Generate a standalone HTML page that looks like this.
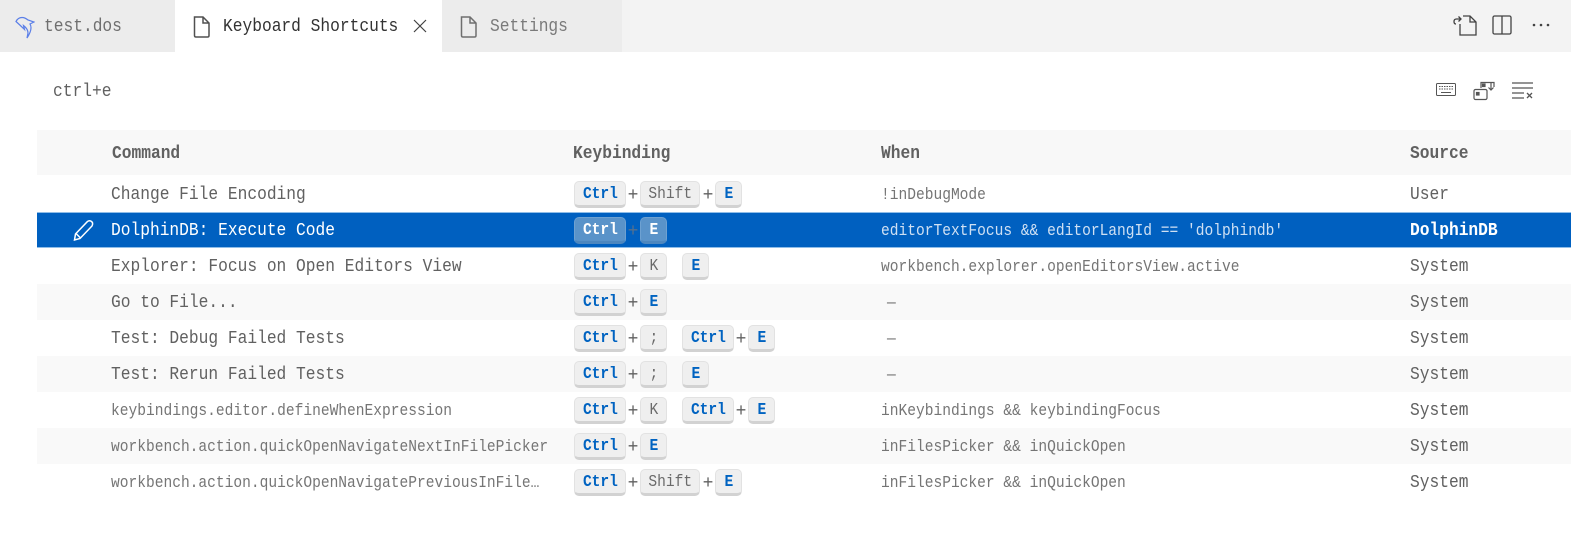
<!DOCTYPE html>
<html><head><meta charset="utf-8"><style>
*{box-sizing:border-box}
html,body{margin:0;padding:0;background:#fff}
#p{position:relative;width:1571px;height:533px;overflow:hidden;background:#fff;font-family:"Liberation Mono","DejaVu Sans Mono",monospace;color:#616161}
#p div,#p svg{position:absolute}
.t{white-space:pre;line-height:24px;height:24px;transform:scaleX(.9);transform-origin:0 50%}
.big{font-size:18.05px}
.sm{font-size:16.2px;color:#757575}
.row{left:37px;width:1534px;height:36px}
.alt{background:#f9f9f9}
.k{height:27px;background:#efefef;border:1px solid #e2e2e2;border-bottom:3px solid #d2d2d2;border-radius:5px;text-align:center;font-size:16.2px;line-height:24px;color:#6a6a6a;white-space:pre}
.k b{display:inline-block;font-weight:inherit;transform:scaleX(.9)}
.h{color:#0063c1;font-weight:bold}
.s .k{background:#5a93c9;border-color:#6ea1d1;border-bottom-color:#4d87bf;color:#fff}
.p{width:12px;text-align:center;font-size:18px;line-height:26px;color:#616161}
</style></head><body><div id="p">
<div style="left:0;top:0;width:1571px;height:52px;background:#f3f3f3"></div>
<div style="left:0;top:0;width:175px;height:52px;background:#ececec"></div>
<div style="left:175px;top:0;width:267px;height:52px;background:#fff"></div>
<div style="left:442px;top:0;width:180px;height:52px;background:#ececec"></div>
<svg style="left:15px;top:16px" width="20" height="24" viewBox="0 0 20 24" fill="none" stroke="#5b7fe8" stroke-width="1.200"><path d="M1 5.500Q3 1.500 7 1.500Q10 1.500 13 4L19 6L15 8Q18 13 12 22L13 17Q13 13 8.500 9.500L9.500 13.500Q6 10 1 5.500Z"/></svg>
<div class="t big" style="left:44px;top:15px;color:#6f6f6f">test.dos</div>
<svg style="left:192px;top:16px" width="20" height="22" viewBox="0 0 20 22" fill="none" stroke="#505050" stroke-width="1.500"><path d="M2.500 1H11L17 7V19.500Q17 21 15.500 21H4Q2.500 21 2.500 19.500V1ZM11 1V7H17"/></svg>
<div class="t big" style="left:223px;top:15px;color:#333">Keyboard Shortcuts</div>
<svg style="left:413px;top:19px" width="14" height="14" viewBox="0 0 14 14" stroke="#424242" stroke-width="1.200"><path d="M1 1L13 13M13 1L1 13"/></svg>
<svg style="left:459px;top:16px" width="20" height="22" viewBox="0 0 20 22" fill="none" stroke="#6f6f6f" stroke-width="1.500"><path d="M2.500 1H11L17 7V19.500Q17 21 15.500 21H4Q2.500 21 2.500 19.500V1ZM11 1V7H17"/></svg>
<div class="t big" style="left:490px;top:15px;color:#7a7a7a">Settings</div>
<svg style="left:1453px;top:14px" width="24" height="24" viewBox="0 0 24 24" fill="none" stroke="#424242" stroke-width="1.300"><path d="M7 10V21H23V8L17 2H10M17 2V8H23M8 5H3.500Q1 5 1 7.500Q1 10 3 10M5.500 2.500L8 5L5.500 7.500"/></svg>
<svg style="left:1492px;top:15px" width="20" height="20" viewBox="0 0 20 20" fill="none" stroke="#424242" stroke-width="1.300"><rect x="1" y="1" width="18" height="18" rx="1.500"/><path d="M10 1V19"/></svg>
<svg style="left:1532px;top:23px" width="18" height="4" viewBox="0 0 18 4" fill="#424242"><circle cx="2" cy="2" r="1.300"/><circle cx="9" cy="2" r="1.300"/><circle cx="16" cy="2" r="1.300"/></svg>

<div class="t big" style="left:53px;top:80px;color:#616161">ctrl+e</div>
<svg style="left:1436px;top:82px" width="21" height="16" viewBox="0 0 21 16" fill="none" stroke="#555" stroke-width="1"><rect x=".5" y="1.500" width="19" height="12" rx="1"/><path stroke-dasharray="1.500 1" d="M3 4.500H17M3 7H17"/><path d="M5 10.500H15"/></svg>
<svg style="left:1473px;top:81px" width="24" height="20" viewBox="0 0 24 20" fill="none" stroke="#555" stroke-width="1.200"><path d="M8 7V1.500H21V6"/><rect x="1" y="8.500" width="13" height="10" rx="1.500"/><path d="M18 2V9M15.500 6.500L18 9L20.500 6.500"/><rect x="3.500" y="11.500" width="2.500" height="2.500" fill="#555"/><rect x="9.500" y="3" width="2.500" height="2.500" fill="#555"/></svg>
<svg style="left:1511px;top:82px" width="23" height="18" viewBox="0 0 23 18" fill="none" stroke="#555" stroke-width="1.300"><path d="M1 1H22M1 6H22M1 11H13M1 16H13M16 11L21 16M21 11L16 16"/></svg>

<div style="left:37px;top:130px;width:1534px;height:45px;background:#f8f8f8"></div>
<div class="t big" style="left:112px;top:142px;font-weight:bold">Command</div>
<div class="t big" style="left:573px;top:142px;font-weight:bold">Keybinding</div>
<div class="t big" style="left:881px;top:142px;font-weight:bold">When</div>
<div class="t big" style="left:1410px;top:142px;font-weight:bold">Source</div>

<div class="row alt" style="top:284px"></div>
<div class="row alt" style="top:356px"></div>
<div class="row alt" style="top:428px"></div>
<div class="row" style="top:212px;height:36px;background:#0060c0;border-top:1px solid #8fbde8;border-bottom:1px solid #8fbde8"></div>

<div class="t big" style="left:111px;top:183px">Change File Encoding</div>
<div class="k h" style="left:574px;top:181px;width:52px"><b>Ctrl</b></div><div class="p" style="left:627px;top:183px">+</div>
<div class="k" style="left:640px;top:181px;width:60px"><b>Shift</b></div><div class="p" style="left:702px;top:183px">+</div>
<div class="k h" style="left:715px;top:181px;width:27px"><b>E</b></div>
<div class="t sm" style="left:881px;top:183px">!inDebugMode</div>
<div class="t big" style="left:1410px;top:183px">User</div>

<svg style="left:72px;top:218px" width="24" height="24" viewBox="0 0 24 24" fill="none" stroke="#fff" stroke-width="1.500"><path d="M2.500 22L3.500 16L15.500 3.500Q17.500 2 19.500 3.500T20 8L8 20.500L2.500 22ZM4.500 16L8 19.500"/></svg>
<div class="t big" style="left:111px;top:219px;color:#fff">DolphinDB: Execute Code</div>
<div class="s">
<div class="k" style="left:574px;top:217px;width:52px;font-weight:bold"><b>Ctrl</b></div><div class="p" style="left:627px;top:219px;color:#55708e">+</div>
<div class="k" style="left:640px;top:217px;width:27px;font-weight:bold"><b>E</b></div>
</div>
<div class="t sm" style="left:881px;top:219px;color:#cfe0f3">editorTextFocus &amp;&amp; editorLangId == 'dolphindb'</div>
<div class="t big" style="left:1410px;top:219px;color:#fff;font-weight:bold">DolphinDB</div>

<div class="t big" style="left:111px;top:255px">Explorer: Focus on Open Editors View</div>
<div class="k h" style="left:574px;top:253px;width:52px"><b>Ctrl</b></div><div class="p" style="left:627px;top:255px">+</div>
<div class="k" style="left:640px;top:253px;width:27px"><b>K</b></div>
<div class="k h" style="left:682px;top:253px;width:27px"><b>E</b></div>
<div class="t sm" style="left:881px;top:255px">workbench.explorer.openEditorsView.active</div>
<div class="t big" style="left:1410px;top:255px">System</div>

<div class="t big" style="left:111px;top:291px">Go to File...</div>
<div class="k h" style="left:574px;top:289px;width:52px"><b>Ctrl</b></div><div class="p" style="left:627px;top:291px">+</div>
<div class="k h" style="left:640px;top:289px;width:27px"><b>E</b></div>
<div class="t sm" style="left:887px;top:291px">—</div>
<div class="t big" style="left:1410px;top:291px">System</div>

<div class="t big" style="left:111px;top:327px">Test: Debug Failed Tests</div>
<div class="k h" style="left:574px;top:325px;width:52px"><b>Ctrl</b></div><div class="p" style="left:627px;top:327px">+</div>
<div class="k" style="left:640px;top:325px;width:27px"><b>;</b></div>
<div class="k h" style="left:682px;top:325px;width:52px"><b>Ctrl</b></div><div class="p" style="left:735px;top:327px">+</div>
<div class="k h" style="left:748px;top:325px;width:27px"><b>E</b></div>
<div class="t sm" style="left:887px;top:327px">—</div>
<div class="t big" style="left:1410px;top:327px">System</div>

<div class="t big" style="left:111px;top:363px">Test: Rerun Failed Tests</div>
<div class="k h" style="left:574px;top:361px;width:52px"><b>Ctrl</b></div><div class="p" style="left:627px;top:363px">+</div>
<div class="k" style="left:640px;top:361px;width:27px"><b>;</b></div>
<div class="k h" style="left:682px;top:361px;width:27px"><b>E</b></div>
<div class="t sm" style="left:887px;top:363px">—</div>
<div class="t big" style="left:1410px;top:363px">System</div>

<div class="t sm" style="left:111px;top:399px">keybindings.editor.defineWhenExpression</div>
<div class="k h" style="left:574px;top:397px;width:52px"><b>Ctrl</b></div><div class="p" style="left:627px;top:399px">+</div>
<div class="k" style="left:640px;top:397px;width:27px"><b>K</b></div>
<div class="k h" style="left:682px;top:397px;width:52px"><b>Ctrl</b></div><div class="p" style="left:735px;top:399px">+</div>
<div class="k h" style="left:748px;top:397px;width:27px"><b>E</b></div>
<div class="t sm" style="left:881px;top:399px">inKeybindings &amp;&amp; keybindingFocus</div>
<div class="t big" style="left:1410px;top:399px">System</div>

<div class="t sm" style="left:111px;top:435px">workbench.action.quickOpenNavigateNextInFilePicker</div>
<div class="k h" style="left:574px;top:433px;width:52px"><b>Ctrl</b></div><div class="p" style="left:627px;top:435px">+</div>
<div class="k h" style="left:640px;top:433px;width:27px"><b>E</b></div>
<div class="t sm" style="left:881px;top:435px">inFilesPicker &amp;&amp; inQuickOpen</div>
<div class="t big" style="left:1410px;top:435px">System</div>

<div class="t sm" style="left:111px;top:471px">workbench.action.quickOpenNavigatePreviousInFile…</div>
<div class="k h" style="left:574px;top:469px;width:52px"><b>Ctrl</b></div><div class="p" style="left:627px;top:471px">+</div>
<div class="k" style="left:640px;top:469px;width:60px"><b>Shift</b></div><div class="p" style="left:702px;top:471px">+</div>
<div class="k h" style="left:715px;top:469px;width:27px"><b>E</b></div>
<div class="t sm" style="left:881px;top:471px">inFilesPicker &amp;&amp; inQuickOpen</div>
<div class="t big" style="left:1410px;top:471px">System</div>
</div></body></html>
